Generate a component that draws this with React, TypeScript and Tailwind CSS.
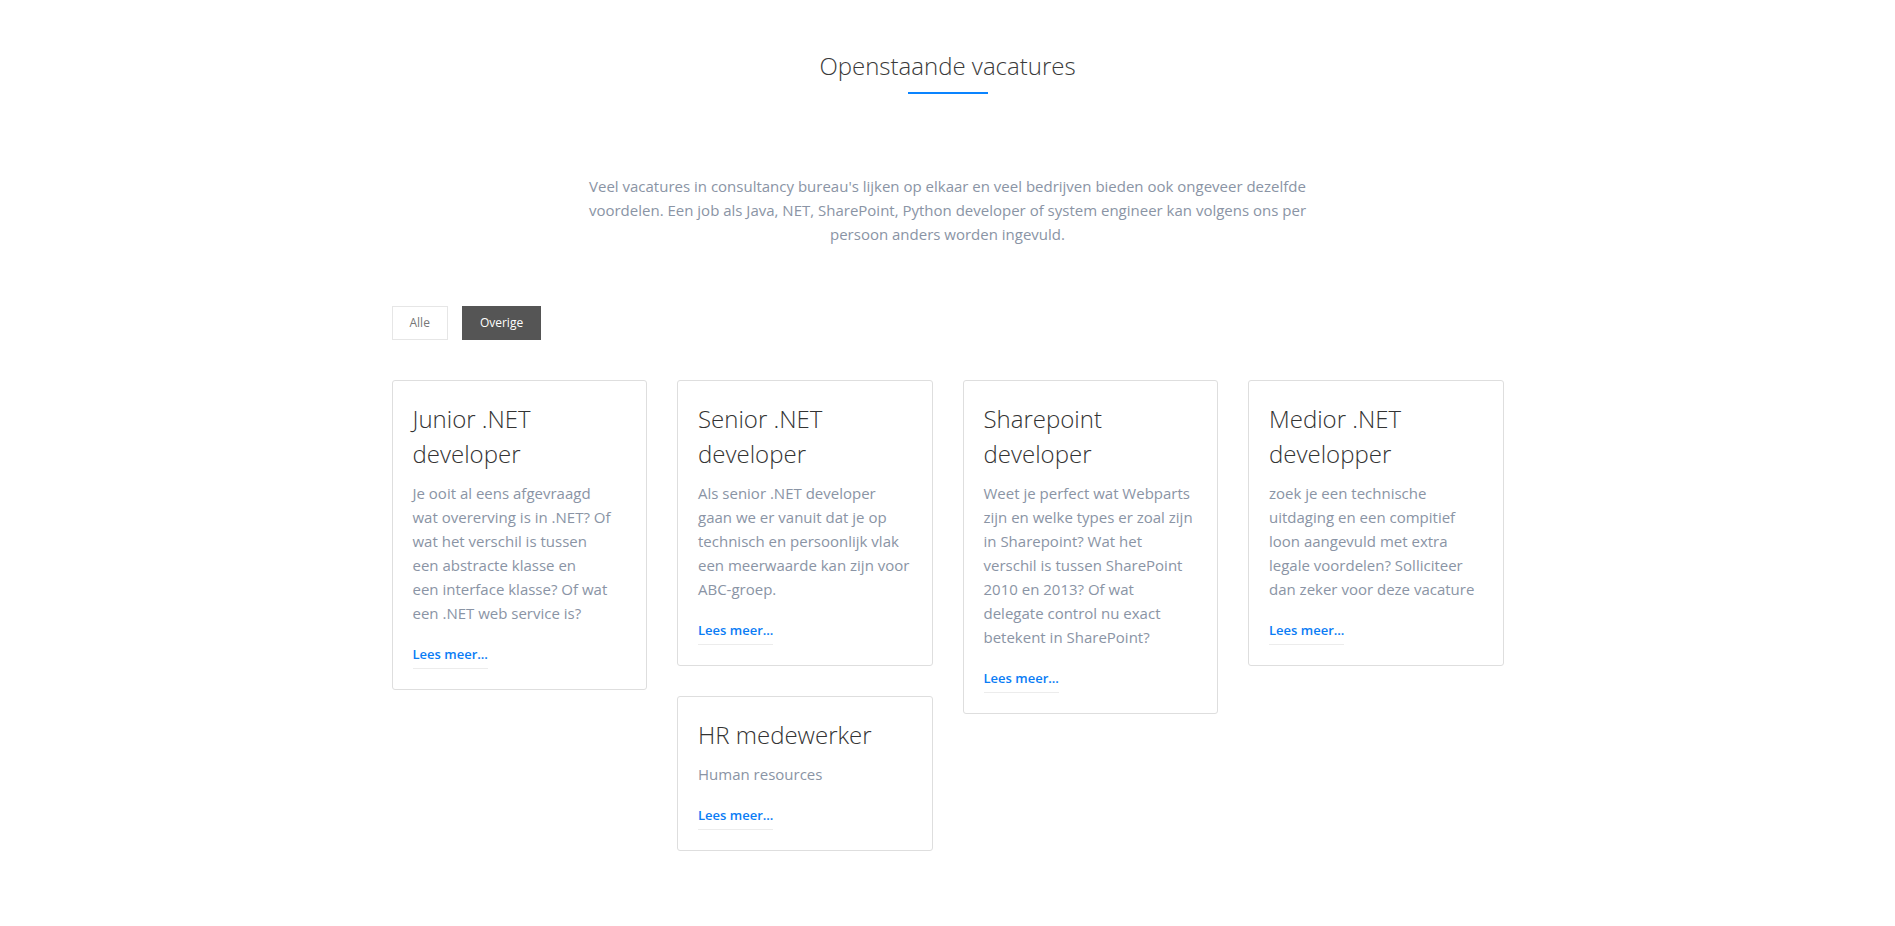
import React, {useState} from 'react';

type Job = {
	title: string;
	lines: string[];
	category: string;
};

// the first text has hard breaks in the original copy
const jobs: Job[] = [
	{
		title: 'Junior .NET developer',
		lines: [
			'Je ooit al eens afgevraagd',
			'wat overerving is in .NET? Of',
			'wat het verschil is tussen',
			'een abstracte klasse en',
			'een interface klasse? Of wat',
			'een .NET web service is?',
		],
		category: 'overige',
	},
	{
		title: 'Senior .NET developer',
		lines: ['Als senior .NET developer gaan we er vanuit dat je op technisch en persoonlijk vlak een meerwaarde kan zijn voor ABC-groep.'],
		category: 'overige',
	},
	{
		title: 'Sharepoint developer',
		lines: ['Weet je perfect wat Webparts zijn en welke types er zoal zijn in Sharepoint? Wat het verschil is tussen SharePoint 2010 en 2013? Of wat delegate control nu exact betekent in SharePoint?'],
		category: 'overige',
	},
	{
		title: 'Medior .NET developper',
		lines: ['zoek je een technische uitdaging en een compitief loon aangevuld met extra legale voordelen? Solliciteer dan zeker voor deze vacature'],
		category: 'overige',
	},
	{
		title: 'HR medewerker',
		lines: ['Human resources'],
		category: 'overige',
	},
];

const columns: number[][] = [[0], [1, 4], [2], [3]];

const JobCard = ({job}: {job: Job}) => {
	return (
		<div className="border border-[#dedede] rounded-[3px] bg-white p-5">
			<h3 className="text-[24px] leading-[35px] font-light text-[#333] mb-2.5">{job.title}</h3>
			<p className="text-[15px] leading-6 text-[#8a94a5] mb-4">
				{job.lines.map((line, i) => (
					<React.Fragment key={i}>
						{i > 0 && <br/>}
						{line}
					</React.Fragment>
				))}
			</p>
			<a href="#"
			   className="inline-block text-[13px] leading-[18px] font-semibold text-[#0a7cf5] pb-[5px] border-b border-[#ececec]">
				Lees meer...
			</a>
		</div>
	);
};

const App = () => {
	const [filter, setFilter] = useState('overige');

	return (
		<div className="min-h-screen bg-white font-['Open_Sans',sans-serif]">
			<section className="w-[1112px] mx-auto pt-[46px] pb-20">
				<div className="flex flex-col items-center">
					<h2 className="text-[24px] leading-[40px] font-light text-[#3a3a3a]">Openstaande vacatures</h2>
					<div className="mt-[6px] h-0.5 w-20 bg-[#0a84ff]"/>
				</div>

				<p className="mt-20 mx-auto w-[730px] text-center text-[15px] leading-6 text-[#8a94a5]">
					Veel vacatures in consultancy bureau's lijken op elkaar en veel bedrijven bieden ook ongeveer
					dezelfde voordelen. Een job als Java, NET, SharePoint, Python developer of system engineer kan
					volgens ons per persoon anders worden ingevuld.
				</p>

				<div className="mt-[60px] flex gap-[14px]">
					<button onClick={() => setFilter('alle')}
					        className={filter === 'alle'
						        ? 'h-[34px] px-[17px] text-[12px] border border-[#555] bg-[#555] text-white'
						        : 'h-[34px] px-[17px] text-[12px] border border-[#e6e6e6] bg-white text-[#777]'}>
						Alle
					</button>
					<button onClick={() => setFilter('overige')}
					        className={filter === 'overige'
						        ? 'h-[34px] px-[17px] text-[12px] border border-[#555] bg-[#555] text-white'
						        : 'h-[34px] px-[17px] text-[12px] border border-[#e6e6e6] bg-white text-[#777]'}>
						Overige
					</button>
				</div>

				<div className="mt-10 grid grid-cols-4 gap-[30px] items-start">
					{columns.map((col, i) => (
						<div key={i} className="flex flex-col gap-[30px]">
							{col.map((idx) => (
								<JobCard key={idx} job={jobs[idx]}/>
							))}
						</div>
					))}
				</div>
			</section>
		</div>
	);
};

export default App;
